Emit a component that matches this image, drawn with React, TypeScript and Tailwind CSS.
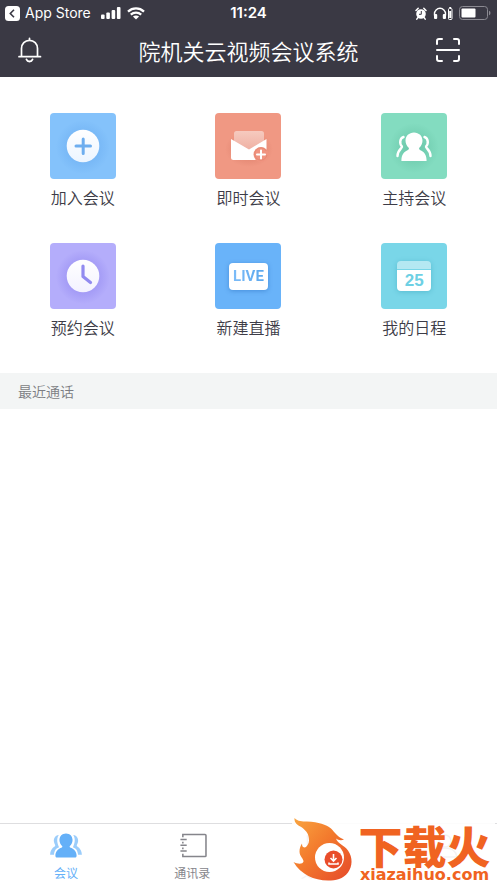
import type { ReactNode } from "react";

type Accion = {
  label: string;
  tile:  string;
  icon:  ReactNode;
};

type Tab = {
  id:     string;
  label:  string | null;
  active: boolean;
  icon:   ReactNode;
};

function PlusIcon() {
  return (
    <svg viewBox="0 0 66 66" className="size-full" aria-hidden="true">
      <defs>
        <radialGradient id="plus-glow">
          <stop offset="0.5" stopColor="#68abf0" stopOpacity="0.5" />
          <stop offset="1" stopColor="#68abf0" stopOpacity="0" />
        </radialGradient>
        <linearGradient id="plus-disc" x1="0" y1="0" x2="0" y2="1">
          <stop offset="0" stopColor="#ffffff" />
          <stop offset="1" stopColor="#ecf5ff" />
        </linearGradient>
      </defs>
      <circle cx="33" cy="34" r="27" fill="url(#plus-glow)" />
      <circle cx="33" cy="33" r="16.3" fill="url(#plus-disc)" />
      <path d="M26 33h14.5M33.2 26v14.5" stroke="#6eaeef" strokeWidth="3" strokeLinecap="round" />
    </svg>
  );
}

function MailIcon() {
  return (
    <svg viewBox="0 0 66 66" className="size-full" aria-hidden="true">
      <defs>
        <radialGradient id="mail-glow">
          <stop offset="0.5" stopColor="#d97a66" stopOpacity="0.5" />
          <stop offset="1" stopColor="#d97a66" stopOpacity="0" />
        </radialGradient>
        <linearGradient id="mail-flap" x1="0" y1="0" x2="0" y2="1">
          <stop offset="0" stopColor="#f6cabf" />
          <stop offset="1" stopColor="#efb0a2" />
        </linearGradient>
      </defs>
      <ellipse cx="34" cy="36" rx="24" ry="18" fill="url(#mail-glow)" />
      <path d="M19 20.500q0-2.500 2.500-2.500h25q2.500 0 2.500 2.500V37H19z" fill="url(#mail-flap)" />
      <path d="M16 26 34 36.500l17.500-10.500v18.500q0 2.500-2.500 2.500H18.500Q16 47 16 44.500z" fill="#ffffff" />
      <circle cx="46" cy="41.500" r="7.500" fill="#f09480" />
      <path d="M51.300 38A6.200 6.200 0 1 0 52 42" fill="none" stroke="#e68873" strokeWidth="1" />
      <path d="M42 41.500h8M46 37.500v8" stroke="#ffffff" strokeWidth="2" strokeLinecap="round" />
    </svg>
  );
}

function HostIcon() {
  return (
    <svg viewBox="0 0 66 66" className="size-full" aria-hidden="true">
      <defs>
        <radialGradient id="host-glow">
          <stop offset="0.3" stopColor="#62c0a2" stopOpacity="0.6" />
          <stop offset="1" stopColor="#62c0a2" stopOpacity="0" />
        </radialGradient>
      </defs>
      <circle cx="33" cy="35" r="25" fill="url(#host-glow)" />
      <g fill="none" stroke="#ffffff" strokeWidth="2.400" strokeLinecap="round" strokeLinejoin="round">
        <path d="M22.500 24c-3.500 1-4.500 6.500-1.500 9.500.8 1.200-4.500 3.500-4.500 9.500" />
        <path d="M43.500 24c3.500 1 4.500 6.500 1.500 9.500-.8 1.200 4.500 3.500 4.500 9.500" />
      </g>
      <path
        d="M33 19.500c-5 0-8.500 3.600-8.500 8.200 0 3 1.500 5.300 3.200 7.100.8 1-.2 2-1.700 2.800-3.500 1.700-5.600 4.500-5.600 10.400h25.200c0-5.900-2.100-8.700-5.600-10.400-1.500-.8-2.500-1.800-1.700-2.800 1.700-1.800 3.200-4.100 3.200-7.100 0-4.600-3.500-8.200-8.500-8.200z"
        fill="#ffffff"
      />
    </svg>
  );
}

function ClockIcon() {
  return (
    <svg viewBox="0 0 66 66" className="size-full" aria-hidden="true">
      <defs>
        <radialGradient id="clock-glow">
          <stop offset="0.5" stopColor="#9187f0" stopOpacity="0.55" />
          <stop offset="1" stopColor="#9187f0" stopOpacity="0" />
        </radialGradient>
        <linearGradient id="clock-disc" x1="0" y1="0" x2="0" y2="1">
          <stop offset="0" stopColor="#ffffff" />
          <stop offset="1" stopColor="#f3f2ff" />
        </linearGradient>
      </defs>
      <circle cx="33" cy="34" r="27" fill="url(#clock-glow)" />
      <circle cx="33" cy="33" r="16.300" fill="url(#clock-disc)" />
      <path d="M33 23v10.500l7.500 6" fill="none" stroke="#928bf0" strokeWidth="3.200" strokeLinecap="round" strokeLinejoin="round" />
    </svg>
  );
}

function LiveIcon() {
  return (
    <span className="flex h-[27px] w-[39px] items-center justify-center rounded-[4px] bg-white font-['Roboto',sans-serif] text-[15px] leading-[20px] font-bold shadow-[0_1px_4px_rgba(40,110,190,0.5)]">
      <span className="bg-linear-to-r from-[#7cbcf8] to-[#5aa7ee] bg-clip-text text-transparent">LIVE</span>
    </span>
  );
}

function CalendarIcon() {
  return (
    <span className="flex w-[34px] flex-col gap-px overflow-hidden rounded-[4px] shadow-[0_1px_5px_rgba(40,150,175,0.4)]">
      <span className="h-2 bg-[#b4e8f2]" />
      <span className="h-[21px] bg-white text-center font-['Liberation_Sans',sans-serif] text-[17px] leading-[21px] font-bold text-[#6dd0e4]">
        25
      </span>
    </span>
  );
}

function PeopleIcon() {
  return (
    <svg viewBox="0 0 34 28" className="h-7 w-[34px]" aria-hidden="true">
      <g fill="#9bcdfb">
        <path d="M9.500 3C5.500 3.500 4 7 4.500 10c.3 2 1.600 3.200 1.300 4.300C5.500 15.600 1 16.500.5 23.500h4c.5-5 2.500-6.700 5.300-7.800C8 12 6.800 7 9.500 3z" />
        <path d="M24.500 3c4 .5 5.500 4 5 7-.3 2-1.600 3.200-1.300 4.300.3 1.300 4.800 2.200 5.300 9.200h-4c-.5-5-2.500-6.700-5.300-7.800C26 12 27.200 7 24.500 3z" />
      </g>
      <path
        d="M17 1.500c-4 0-6.800 2.900-6.800 6.700 0 2.700 1.300 4.800 2.800 6.300.5.700.2 1.400-1 1.900-3.400 1.500-6 4.100-6 8.100 0 1.300.7 2 2 2h18c1.300 0 2-.7 2-2 0-4-2.600-6.600-6-8.100-1.200-.5-1.500-1.200-1-1.900 1.500-1.500 2.800-3.600 2.800-6.300 0-3.800-2.800-6.700-6.800-6.700z"
        fill="#64b0f8"
      />
    </svg>
  );
}

function ContactsIcon() {
  return (
    <svg viewBox="0 0 34 28" className="h-7 w-[34px]" fill="none" stroke="#85858b" aria-hidden="true">
      <path d="M7.500 5.500V2.500H30.500q1 0 1 1v21q0 1-1 1H7.500v-3M7.500 10v2M7.500 16v2" strokeWidth="1.600" />
      <path d="M5 7.800h6.500M5 13.800h6.500M5 19.800h6.500" strokeWidth="1.600" />
    </svg>
  );
}

function FolderIcon() {
  return (
    <svg viewBox="0 0 34 28" className="h-7 w-[34px]" fill="none" stroke="#85858b" strokeWidth="1.500" aria-hidden="true">
      <path d="M5 4h9l3 4h12v17H5z" />
    </svg>
  );
}

function MeIcon() {
  return (
    <svg viewBox="0 0 34 28" className="h-7 w-[34px]" fill="none" stroke="#85858b" strokeWidth="1.500" aria-hidden="true">
      <circle cx="17" cy="9" r="6" />
      <path d="M5 25c1-6 5-9 12-9s11 3 12 9z" />
    </svg>
  );
}

const acciones: Accion[] = [
  { label: "加入会议", tile: "bg-[#84c2fb]", icon: <PlusIcon /> },
  { label: "即时会议", tile: "bg-[#f09883]", icon: <MailIcon /> },
  { label: "主持会议", tile: "bg-[#83dcc0]", icon: <HostIcon /> },
  { label: "预约会议", tile: "bg-[#b4adfb]", icon: <ClockIcon /> },
  { label: "新建直播", tile: "bg-[#69b3f9]", icon: <LiveIcon /> },
  { label: "我的日程", tile: "bg-[#79d6e8]", icon: <CalendarIcon /> },
];

const tabs: Tab[] = [
  { id: "meetings", label: "会议",   active: true,  icon: <PeopleIcon /> },
  { id: "contacts", label: "通讯录", active: false, icon: <ContactsIcon /> },
  { id: "files",    label: "文件夹", active: false, icon: <FolderIcon /> },
  { id: "profile",  label: null,     active: false, icon: <MeIcon /> },
];

function StatusBar() {
  return (
    <div className="grid h-[26px] grid-cols-[1fr_auto_1fr] items-center px-[5px] font-['Inter',sans-serif] text-white">
      <div className="flex items-center">
        <a href="#app-store" className="flex items-center gap-[5px] text-[14px] leading-[20px]">
          <svg viewBox="0 0 15 15" className="size-[15px]" aria-hidden="true">
            <rect width="15" height="15" rx="3.500" fill="#ffffff" />
            <path d="M9 3.800 5.300 7.500 9 11.200" fill="none" stroke="#3a3944" strokeWidth="1.600" />
          </svg>
          App Store
        </a>
        <svg viewBox="0 0 20 12" className="ml-2.5 h-3 w-5" fill="#ffffff" aria-hidden="true">
          <rect x="0" y="7.500" width="3.600" height="4.500" rx="1" />
          <rect x="5.300" y="5.500" width="3.600" height="6.500" rx="1" />
          <rect x="10.600" y="3" width="3.600" height="9" rx="1" />
          <rect x="15.900" y="0" width="3.600" height="12" rx="1" />
        </svg>
        <svg viewBox="0 0 18 13" className="ml-1.5 h-[13px] w-[18px]" fill="none" stroke="#ffffff" strokeWidth="2.300" aria-hidden="true">
          <path d="M1 4.600c4.600-4.200 11.400-4.200 16 0M3.800 7.600c3-2.700 7.400-2.700 10.400 0" />
          <path d="M9 12.500 5.900 9.600c1.800-1.500 4.400-1.500 6.200 0z" fill="#ffffff" stroke="none" />
        </svg>
      </div>
      <time className="text-[15px] leading-[20px] font-semibold">11:24</time>
      <div className="flex items-center justify-end">
        <svg viewBox="0 0 12 13" className="h-[13px] w-3" aria-hidden="true">
          <circle cx="6" cy="7" r="4.800" fill="#ffffff" />
          <path d="M1 3.500 3.200 1.300M11 3.500 8.800 1.300M2.800 10.800l-1 1.300M9.200 10.800l1 1.300" stroke="#ffffff" strokeWidth="1.500" strokeLinecap="round" />
          <path d="M6.300 4v3.300H4" fill="none" stroke="#3a3944" strokeWidth="1" />
        </svg>
        <svg viewBox="0 0 20 14" className="ml-1.5 h-3.5 w-5" aria-hidden="true">
          <path d="M1.500 9.500V7.800a5.500 5.500 0 0 1 11 0v1.700" fill="none" stroke="#ffffff" strokeWidth="1.400" />
          <rect x="1" y="8" width="3.200" height="5" rx="1" fill="#ffffff" />
          <rect x="9.800" y="8" width="3.200" height="5" rx="1" fill="#ffffff" />
          <rect x="15.500" y="2.500" width="3.500" height="11" rx="1" fill="none" stroke="#ffffff" />
          <path d="M17.200 1v1M17.200 5v7" stroke="#ffffff" strokeWidth="2" />
        </svg>
        <svg viewBox="0 0 33 14" className="ml-1.5 h-3.5 w-[33px]" aria-hidden="true">
          <rect x="0.500" y="0.500" width="28" height="13" rx="3" fill="none" stroke="#8b8a92" />
          <rect x="2.500" y="2.500" width="14" height="9" rx="1" fill="#ffffff" />
          <path d="M30 4.800q1.500.5 1.500 2.200T30 9.200z" fill="#8b8a92" />
        </svg>
      </div>
    </div>
  );
}

// Logo flotante en la esquina, tapa parte de la barra inferior
function LogoDescarga() {
  return (
    <div className="absolute right-0.5 bottom-0 flex h-[66px] w-[203px] bg-white/90 text-[#f06321]">
      <svg viewBox="0 0 62 66" className="h-[66px] w-[62px] shrink-0" aria-hidden="true">
        <defs>
          <linearGradient id="flame" x1="0" y1="0" x2="1" y2="1">
            <stop offset="0" stopColor="#f9a540" />
            <stop offset="0.450" stopColor="#f37a2d" />
            <stop offset="1" stopColor="#e5492a" />
          </linearGradient>
        </defs>
        <path
          d="M2.500 1C6 4.500 10 4.500 15 4.500c12 .5 19 3 24 7 4 4 7 9 13 11-3 1.500-6 .5-8-1 2 6 8 6 12 12 5 7 4.500 16 0 22-5 6.500-12 8-20 8-14 0-27-6-34.500-18.500 4 2 9 2.500 10-.5 0-3-4-5-4-10 0-3 1-6 2.500-8 0 3 1 4 3 4 2-1 4-4 4-7 0-6-2-9-7-13C5.500 8 2 6 2.500 1z"
          fill="url(#flame)"
        />
        <circle cx="37.500" cy="40.500" r="14.500" fill="#ffffff" />
        <circle cx="41.500" cy="42.500" r="9" fill="#e94d2b" />
        <path d="M41.500 37v6M38.500 41l3 3 3-3M37 45.500v1.500h9v-1.500" fill="none" stroke="#ffffff" strokeWidth="1.600" />
      </svg>
      <div className="flex flex-1 flex-col items-center justify-end gap-1 pb-0.5 whitespace-nowrap">
        <span className="font-['Noto_Sans_CJK_SC',sans-serif] text-[44px] leading-[40px] font-black">下载火</span>
        <span className="font-['DejaVu_Sans',sans-serif] text-[16px] leading-[12px] font-bold">xiazaihuo.com</span>
      </div>
    </div>
  );
}

export default function App() {
  return (
    <div className="relative flex min-h-screen flex-col bg-white font-['Noto_Sans_CJK_SC',sans-serif] text-[#3d3c47]">
      <header className="bg-[#3a3944] text-white">
        <StatusBar />
        <div className="grid h-[51px] grid-cols-[1fr_auto_1fr] items-center pr-9 pb-1 pl-[17px]">
          <button type="button" aria-label="通知" className="size-[26px]">
            <svg viewBox="0 0 26 26" fill="none" stroke="#ffffff" strokeWidth="1.700" strokeLinecap="round" aria-hidden="true">
              <path d="M4.500 19.500v-8C4.500 6.800 8 3.300 12.500 3.300s8 3.500 8 8.200v8M2 19.700h21.500M12.500 1.300v2" />
              <path d="M9.500 22.500c.6 1.500 1.700 2 3 2s2.400-.5 3-2" strokeWidth="1.900" />
            </svg>
          </button>
          <h1 className="ml-[19px] text-[22px] leading-[32px] font-[350]">院机关云视频会议系统</h1>
          <button type="button" aria-label="扫一扫" className="size-[26px] justify-self-end">
            <svg viewBox="0 0 26 26" fill="none" stroke="#ffffff" strokeWidth="2" strokeLinecap="round" strokeLinejoin="round" aria-hidden="true">
              <path d="M2 7V4q0-2 2-2h3M19 2h3q2 0 2 2v3M24 19v3q0 2-2 2h-3M7 24H4q-2 0-2-2v-3M2 13h22" />
            </svg>
          </button>
        </div>
      </header>

      <main className="flex-1">
        <div className="grid grid-cols-3 gap-y-[34px] pt-9 pb-[34px]">
          {acciones.map((a) => (
            <button key={a.label} type="button" className="flex flex-col items-center gap-1.5">
              <span className={`flex size-[66px] items-center justify-center rounded-[4px] ${a.tile}`}>
                {a.icon}
              </span>
              <span className="text-[16px] leading-[24px] font-[350]">{a.label}</span>
            </button>
          ))}
        </div>
        <h2 className="bg-[#f3f5f5] px-[18px] py-1.5 text-[14px] leading-[24px] font-[350] text-[#7c7d83]">最近通话</h2>
      </main>

      {/* Barra inferior */}
      <nav className="flex h-[60px] justify-between border-t border-[#dedee0] pt-2 pr-8 pl-[46px]">
        {tabs.map((t) => (
          <a
            key={t.id}
            href={`#${t.id}`}
            aria-label={t.label ?? "我"}
            className={`flex w-10 flex-col items-center gap-1 text-[12px] leading-[20px] whitespace-nowrap ${
              t.active ? "text-[#64b0f8]" : "text-[#85858b]"
            }`}
          >
            {t.icon}
            {t.label}
          </a>
        ))}
      </nav>

      <LogoDescarga />
    </div>
  );
}
